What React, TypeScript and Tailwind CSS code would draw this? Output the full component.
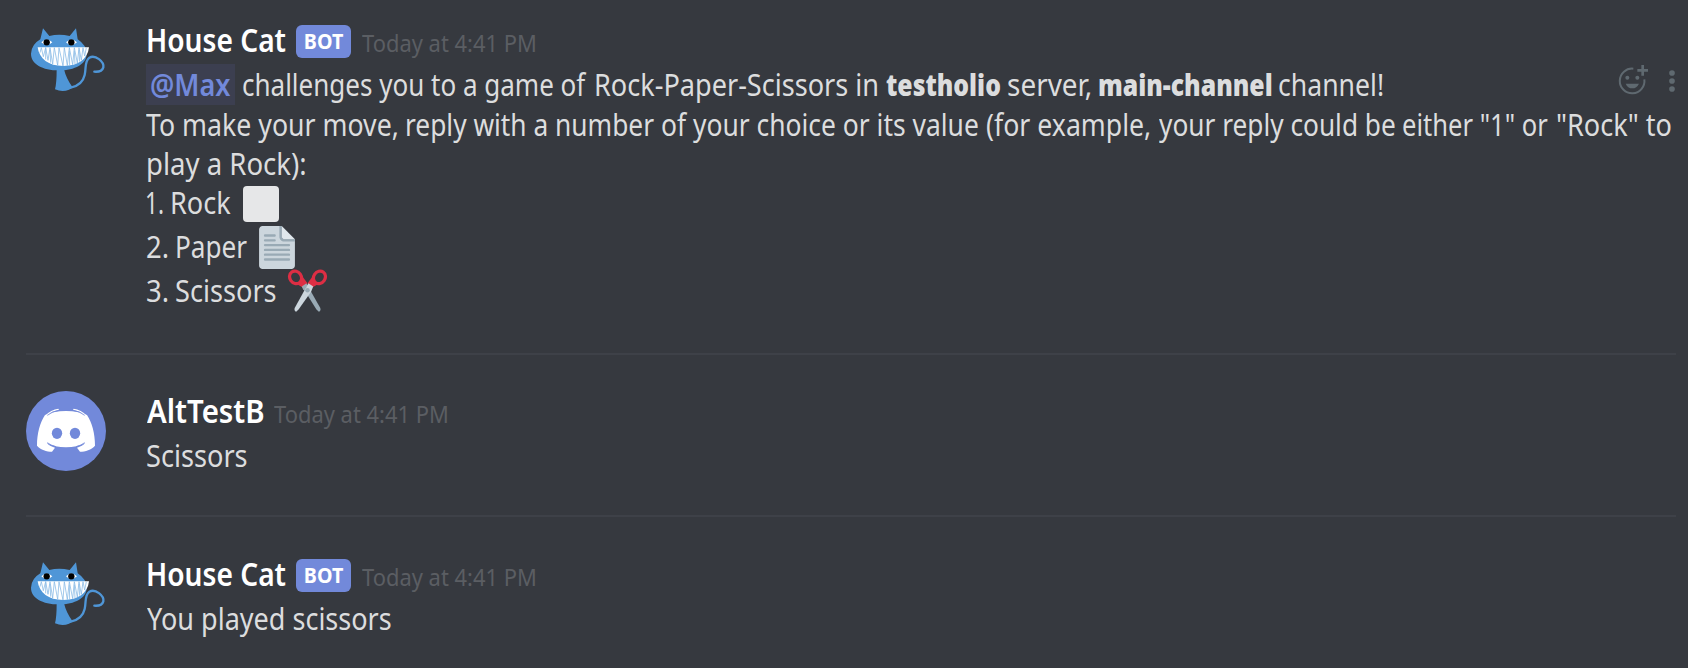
import type { ReactNode } from "react";

function Run({ className, children }: { className: string; children: ReactNode }) {
  return <span className={`block shrink-0 origin-left whitespace-nowrap ${className}`}>{children}</span>;
}

function CatAvatar() {
  return (
    <svg viewBox="0 0 300 240" className="h-20 w-[100px]" aria-hidden="true">
      <path
        d="M152 203C176 198 190 183 194 165C199 145 193 123 208 113C226 103 253 125 250 142C247 153 236 156 223 155"
        fill="none"
        stroke="#4f96d7"
        strokeWidth="7"
        strokeLinecap="round"
      />
      <path d="M110 148H132C137 168 144 182 157 201Q155 206 147 209Q127 217 105 208Q110 190 110 148Z" fill="#4f96d7" />
      <path
        d="M61 58L69 25L88 48Q117 41 149 48L168 25L173 58Q200 76 200 101C200 132 165 151 117 151C67 151 33 132 33 101Q34 74 61 58Z"
        fill="#4f96d7"
      />
      <path d="M64 67Q80 50 97 67Q80 84 64 67ZM138 67Q154 50 171 67Q154 84 138 67Z" fill="#fff" />
      <circle cx="80" cy="67" r="9.5" fill="#000" />
      <circle cx="154" cy="67" r="9.5" fill="#000" />
      <path d="M53 82H207C203 117 176 138 130 138C85 138 58 117 53 82Z" fill="#fff" />
      <path
        d="M64 83L70 110L77 83L84 121L90 83L98 132L103 83L113 136L117 83L129 138L133 83L142 137L148 83L158 134L163 83L172 129L177 83L184 121L189 83L194 108L199 83M60 98L64 83M77 118L77 83M92 128L90 90M149 136L148 92M165 133L163 92M179 125L177 90"
        fill="none"
        stroke="#8abbe6"
        strokeWidth="2.4"
      />
    </svg>
  );
}

function DiscordAvatar() {
  return (
    <svg viewBox="18 18 240 240" className="size-20" aria-hidden="true">
      <circle cx="138" cy="138" r="120" fill="#7289da" />
      <path
        d="M75 90C92 82 112 78 138 78C164 78 184 82 201 90C216 113 225 145 225 182C214 194 196 200 180 200L171 188C182 185 190 180 196 174C180 182 160 187 138 187C116 187 96 182 80 174C86 180 94 185 105 188L96 200C80 200 62 194 51 182C51 145 60 113 75 90Z"
        fill="#fff"
      />
      <path d="M76 92C86 80 101 73 115 71L117 74C103 77 91 82 82 89ZM200 92C190 80 175 73 161 71L159 74C173 77 185 82 194 89Z" fill="#fff" />
      <path
        d="M82 91Q97 79 117 76M194 91Q179 79 159 76M82 173Q92 181 108 185M194 173Q184 181 168 185"
        fill="none"
        stroke="#7289da"
        strokeWidth="2.5"
      />
      <ellipse cx="111" cy="145" rx="15.5" ry="17" fill="#7289da" />
      <ellipse cx="165" cy="145" rx="15.5" ry="17" fill="#7289da" />
    </svg>
  );
}

function PaperEmoji() {
  return (
    <svg viewBox="3 0 30 36" className="h-[43px] w-9 shrink-0" aria-hidden="true">
      <path d="M22 0H6C4.300 0 3 1.300 3 3V33C3 34.700 4.300 36 6 36H30C31.700 36 33 34.700 33 33V11H24C23 11 22 10 22 9Z" fill="#ccd6dd" />
      <path d="M22 0L33 11H24C23 11 22 10 22 9Z" fill="#e1e8ed" />
      <path d="M22 0H20V9C20 11.200 21.800 13 24 13H33V11H24C23 11 22 10 22 9Z" fill="#99aab5" />
      <path d="M8 8H16M8 12H16M8 16H28M8 20H28M8 24H28M8 28H28" stroke="#99aab5" strokeWidth="2" strokeLinecap="round" />
    </svg>
  );
}

function ScissorsEmoji() {
  return (
    <svg viewBox="0 0 36 36" className="size-[43px] shrink-0" aria-hidden="true">
      <path d="M13 14L17 12L28.600 32.500C29.300 34 28.800 35.400 27.500 35.800L25.500 34Z" fill="#99aab5" />
      <ellipse cx="8" cy="7" rx="4.800" ry="5.500" transform="rotate(-35 8 7)" fill="none" stroke="#dd2e44" strokeWidth="2.700" />
      <ellipse cx="28" cy="7" rx="4.800" ry="5.500" transform="rotate(35 28 7)" fill="none" stroke="#dd2e44" strokeWidth="2.700" />
      <path d="M12.500 4.500L18 12L14 15.500L11.500 14L9.500 12.800L12.200 9Z" fill="#dd2e44" />
      <path d="M23.500 4.500L18 12L22 15.500L24.500 14L26.500 12.800L23.800 9Z" fill="#dd2e44" />
      <path d="M18.700 12L22.800 14.600L21 19L10.500 34L8.500 35.800C7.200 35.400 6.700 34 7.400 32.500Z" fill="#ccd6dd" />
      <path d="M17.300 12L13.200 14.600L14.600 17.800L17 15.200Z" fill="#99aab5" />
      <circle cx="18" cy="17.800" r="1.900" fill="#99aab5" />
    </svg>
  );
}

function MessageActions() {
  return (
    <svg viewBox="108 42 192 102" className="ml-auto h-[34px] w-16 shrink-0" aria-label="Message actions">
      <path d="M160 56A37 37 0 1 0 193 88" fill="none" stroke="#5f6970" strokeWidth="6" />
      <path d="M188 45V77M172 61H204" stroke="#5f6970" strokeWidth="8" />
      <circle cx="142" cy="83" r="6" fill="#5f6970" />
      <circle cx="172" cy="83" r="6" fill="#5f6970" />
      <path d="M137 101H177Q170 115 157 115Q143 115 137 101Z" fill="#5f6970" />
      <circle cx="276" cy="69" r="8.500" fill="#5f6970" />
      <circle cx="276" cy="93" r="8.500" fill="#5f6970" />
      <circle cx="276" cy="117" r="8.500" fill="#5f6970" />
    </svg>
  );
}

function Timestamp() {
  return <Run className="w-[176px] scale-x-[0.933] text-[23.5px] text-[#5b5e63]">Today at 4:41 PM</Run>;
}

function BotHeader() {
  return (
    <div className="flex h-11 items-baseline leading-10">
      <Run className="-ml-[0.5px] w-[150.5px] scale-x-[0.879] text-[32px] font-semibold text-white">House Cat</Run>
      <span className="mt-[5px] mr-[10.8px] flex h-[33px] w-[55px] shrink-0 items-center justify-center self-start rounded-md bg-[#7289da] text-[20.5px] leading-[33px] font-bold text-white">
        <span className="block scale-x-[0.96]">BOT</span>
      </span>
      <Timestamp />
    </div>
  );
}

function Separator() {
  return <div className="ml-[26px] h-0.5 w-[1650px] shrink-0 bg-[#3e4148]" />;
}

export default function App() {
  return (
    <main className="flex h-[668px] w-[1688px] flex-col overflow-hidden bg-[#36393f] font-['Noto_Sans',sans-serif] text-[30px] leading-[42px] text-[#dcddde]">
      <article className="flex h-[353px] shrink-0 pt-5">
        <div className="ml-5 w-[126px] shrink-0">
          <CatAvatar />
        </div>
        <div className="w-[1534px]">
          <BotHeader />
          <div className="flex h-10">
            <span className="mr-[6.8px] h-[41px] w-[89px] shrink-0 bg-[#3c3f50] pl-1">
              <Run className="w-[80px] scale-x-[0.902] font-semibold text-[#7289da]">@Max</Run>
            </span>
            <Run className="w-[352.7px] scale-x-[0.867]">challenges you to a game of </Run>
            <Run className="w-[291.5px] scale-x-[0.903]">Rock-Paper-Scissors in </Run>
            <Run className="w-[120.8px] scale-x-[0.824] font-black">testholio</Run>
            <Run className="w-[90.9px] scale-x-[0.931]">server, </Run>
            <Run className="w-[180.4px] scale-x-[0.826] font-black">main-channel</Run>
            <Run className="w-[108px] scale-x-[0.887]">channel!</Run>
            <MessageActions />
          </div>
          <div className="flex h-[39px]">
            <Run className="w-[259.2px] scale-x-[0.89]">To make your move, </Run>
            <Run className="w-[255.9px] scale-x-[0.877]">reply with a number </Run>
            <Run className="w-[325px] scale-x-[0.881]">of your choice or its value </Run>
            <Run className="w-[172.9px] scale-x-[0.889]">(for example, </Run>
            <Run className="w-[243.1px] scale-x-[0.875]">your reply could be </Run>
            <Run className="w-[153.5px] scale-x-[0.852]">either "1" or </Run>
            <Run className="w-[118px] scale-x-[0.902]">"Rock" to</Run>
          </div>
          <Run className="-ml-[0.5px] h-[39px] w-[160px] scale-x-[0.918]">play a Rock):</Run>
          <div className="flex h-[43px]">
            <Run className="-ml-px w-[24.9px] scale-x-[0.756]">1. </Run>
            <Run className="w-[73.1px] scale-x-[0.902]">Rock</Run>
            <span className="mt-1 size-9 rounded bg-[#e6e7e8]" />
          </div>
          <div className="flex h-11 leading-[44px]">
            <Run className="w-[29.3px] scale-x-[0.916]">2. </Run>
            <Run className="w-[83.7px] scale-x-[0.871]">Paper</Run>
            <span className="mt-px">
              <PaperEmoji />
            </span>
          </div>
          <div className="flex h-11 leading-[44px]">
            <Run className="w-[28.8px] scale-x-[0.916]">3. </Run>
            <Run className="w-[111px] scale-x-[0.905]">Scissors</Run>
            <ScissorsEmoji />
          </div>
        </div>
      </article>
      <Separator />
      <article className="flex h-[160px] shrink-0 pt-9">
        <div className="ml-[26px] w-[120px] shrink-0">
          <DiscordAvatar />
        </div>
        <div>
          <div className="flex h-11 items-baseline leading-10">
            <Run className="ml-[0.7px] w-[127.3px] scale-x-[0.918] text-[32px] font-semibold text-white">AltTestB</Run>
            <Timestamp />
          </div>
          <Run className="w-[103px] scale-x-[0.905]">Scissors</Run>
        </div>
      </article>
      <Separator />
      <article className="flex grow pt-[37px]">
        <div className="ml-5 w-[126px] shrink-0">
          <CatAvatar />
        </div>
        <div>
          <BotHeader />
          <Run className="ml-px w-[246px] scale-x-[0.901]">You played scissors</Run>
        </div>
      </article>
    </main>
  );
}
